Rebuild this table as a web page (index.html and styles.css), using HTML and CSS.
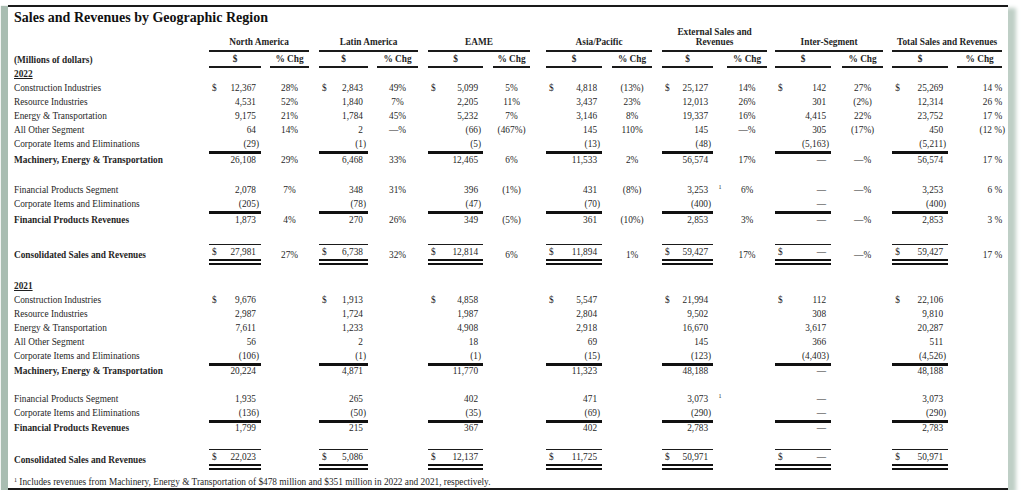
FILE: index.html
```html
<!DOCTYPE html>
<html lang="en">
<head>
<meta charset="utf-8">
<title>Sales and Revenues by Geographic Region</title>
<link rel="stylesheet" href="styles.css">
</head>
<body>
<div class="frame">
<h1 class="title">Sales and Revenues by Geographic Region</h1>
<table class="tbl">
<colgroup>
<col class="c195">
<col class="c52"><col class="c9"><col class="c39"><col class="c10">
<col class="c49"><col class="c9"><col class="c41"><col class="c10">
<col class="c55"><col class="c10"><col class="c37"><col class="c16">
<col class="c56"><col class="c10"><col class="c40"><col class="c10">
<col class="c51"><col class="c14"><col class="c40"><col class="c8">
<col class="c56"><col class="c11"><col class="c41"><col class="c9">
<col class="c56"><col class="c9"><col class="c45">
</colgroup>
<thead>
<tr class="h1"><td></td><td colspan="3" class="gh">North America</td><td></td><td colspan="3" class="gh">Latin America</td><td></td><td colspan="3" class="gh">EAME</td><td></td><td colspan="3" class="gh">Asia/Pacific</td><td></td><td colspan="3" class="gh">External Sales and Revenues</td><td></td><td colspan="3" class="gh">Inter-Segment</td><td></td><td colspan="3" class="gh">Total Sales and Revenues</td></tr>
<tr class="h2"><td class="l b">(Millions of dollars)</td><td class="sh">$</td><td></td><td class="sh">% Chg</td><td></td><td class="sh">$</td><td></td><td class="sh">% Chg</td><td></td><td class="sh">$</td><td></td><td class="sh">% Chg</td><td></td><td class="sh">$</td><td></td><td class="sh">% Chg</td><td></td><td class="sh">$</td><td></td><td class="sh">% Chg</td><td></td><td class="sh">$</td><td></td><td class="sh">% Chg</td><td></td><td class="sh">$</td><td></td><td class="sh">% Chg</td></tr>
</thead>
<tbody class="y22">
<tr class="yr"><td class="l b u">2022</td><td colspan="27"></td></tr>
<tr><td class="l">Construction Industries</td><td class="v"><span class="d">$</span>12,367</td><td></td><td class="p">28%</td><td></td><td class="v"><span class="d">$</span>2,843</td><td></td><td class="p">49%</td><td></td><td class="v"><span class="d">$</span>5,099</td><td></td><td class="p">5%</td><td></td><td class="v"><span class="d">$</span>4,818</td><td></td><td class="p">(13%)</td><td></td><td class="v"><span class="d">$</span>25,127</td><td></td><td class="p">14%</td><td></td><td class="v"><span class="d">$</span>142</td><td></td><td class="p">27%</td><td></td><td class="v"><span class="d">$</span>25,269</td><td></td><td class="tp">14 %</td></tr>
<tr><td class="l">Resource Industries</td><td class="v">4,531</td><td></td><td class="p">52%</td><td></td><td class="v">1,840</td><td></td><td class="p">7%</td><td></td><td class="v">2,205</td><td></td><td class="p">11%</td><td></td><td class="v">3,437</td><td></td><td class="p">23%</td><td></td><td class="v">12,013</td><td></td><td class="p">26%</td><td></td><td class="v">301</td><td></td><td class="p">(2%)</td><td></td><td class="v">12,314</td><td></td><td class="tp">26 %</td></tr>
<tr><td class="l">Energy &amp; Transportation</td><td class="v">9,175</td><td></td><td class="p">21%</td><td></td><td class="v">1,784</td><td></td><td class="p">45%</td><td></td><td class="v">5,232</td><td></td><td class="p">7%</td><td></td><td class="v">3,146</td><td></td><td class="p">8%</td><td></td><td class="v">19,337</td><td></td><td class="p">16%</td><td></td><td class="v">4,415</td><td></td><td class="p">22%</td><td></td><td class="v">23,752</td><td></td><td class="tp">17 %</td></tr>
<tr><td class="l">All Other Segment</td><td class="v">64</td><td></td><td class="p">14%</td><td></td><td class="v">2</td><td></td><td class="p">—%</td><td></td><td class="v"><span class="n">(66)</span></td><td></td><td class="p">(467%)</td><td></td><td class="v">145</td><td></td><td class="p">110%</td><td></td><td class="v">145</td><td></td><td class="p">—%</td><td></td><td class="v">305</td><td></td><td class="p">(17%)</td><td></td><td class="v">450</td><td></td><td class="tp"><span class="n">(12 %)</span></td></tr>
<tr><td class="l">Corporate Items and Eliminations</td><td class="v"><span class="n">(29)</span></td><td></td><td class="p"></td><td></td><td class="v"><span class="n">(1)</span></td><td></td><td class="p"></td><td></td><td class="v"><span class="n">(5)</span></td><td></td><td class="p"></td><td></td><td class="v"><span class="n">(13)</span></td><td></td><td class="p"></td><td></td><td class="v"><span class="n">(48)</span></td><td></td><td class="p"></td><td></td><td class="v"><span class="n">(5,163)</span></td><td></td><td class="p"></td><td></td><td class="v"><span class="n">(5,211)</span></td><td></td><td class="tp"></td></tr>
<tr class="sub"><td class="l b">Machinery, Energy &amp; Transportation</td><td class="v">26,108</td><td></td><td class="p">29%</td><td></td><td class="v">6,468</td><td></td><td class="p">33%</td><td></td><td class="v">12,465</td><td></td><td class="p">6%</td><td></td><td class="v">11,533</td><td></td><td class="p">2%</td><td></td><td class="v">56,574</td><td></td><td class="p">17%</td><td></td><td class="v">—</td><td></td><td class="p">—%</td><td></td><td class="v">56,574</td><td></td><td class="tp">17 %</td></tr>
<tr class="s16"><td colspan="28"></td></tr>
<tr><td class="l">Financial Products Segment</td><td class="v">2,078</td><td></td><td class="p">7%</td><td></td><td class="v">348</td><td></td><td class="p">31%</td><td></td><td class="v">396</td><td></td><td class="p">(1%)</td><td></td><td class="v">431</td><td></td><td class="p">(8%)</td><td></td><td class="v">3,253</td><td class="m">1</td><td class="p">6%</td><td></td><td class="v">—</td><td></td><td class="p">—%</td><td></td><td class="v">3,253</td><td></td><td class="tp">6 %</td></tr>
<tr><td class="l">Corporate Items and Eliminations</td><td class="v"><span class="n">(205)</span></td><td></td><td class="p"></td><td></td><td class="v"><span class="n">(78)</span></td><td></td><td class="p"></td><td></td><td class="v"><span class="n">(47)</span></td><td></td><td class="p"></td><td></td><td class="v"><span class="n">(70)</span></td><td></td><td class="p"></td><td></td><td class="v"><span class="n">(400)</span></td><td></td><td class="p"></td><td></td><td class="v">—</td><td></td><td class="p"></td><td></td><td class="v"><span class="n">(400)</span></td><td></td><td class="tp"></td></tr>
<tr class="sub"><td class="l b">Financial Products Revenues</td><td class="v">1,873</td><td></td><td class="p">4%</td><td></td><td class="v">270</td><td></td><td class="p">26%</td><td></td><td class="v">349</td><td></td><td class="p">(5%)</td><td></td><td class="v">361</td><td></td><td class="p">(10%)</td><td></td><td class="v">2,853</td><td></td><td class="p">3%</td><td></td><td class="v">—</td><td></td><td class="p">—%</td><td></td><td class="v">2,853</td><td></td><td class="tp">3 %</td></tr>
<tr class="s17"><td colspan="28"></td></tr>
<tr class="con"><td class="l b">Consolidated Sales and Revenues</td><td class="v"><span class="d">$</span>27,981</td><td></td><td class="p">27%</td><td></td><td class="v"><span class="d">$</span>6,738</td><td></td><td class="p">32%</td><td></td><td class="v"><span class="d">$</span>12,814</td><td></td><td class="p">6%</td><td></td><td class="v"><span class="d">$</span>11,894</td><td></td><td class="p">1%</td><td></td><td class="v"><span class="d">$</span>59,427</td><td></td><td class="p">17%</td><td></td><td class="v"><span class="d">$</span>—</td><td></td><td class="p">—%</td><td></td><td class="v"><span class="d">$</span>59,427</td><td></td><td class="tp">17 %</td></tr>
<tr class="s16"><td colspan="28"></td></tr>
</tbody>
<tbody class="y21">
<tr class="yr"><td class="l b u">2021</td><td colspan="27"></td></tr>
<tr><td class="l">Construction Industries</td><td class="v"><span class="d">$</span>9,676</td><td></td><td class="p"></td><td></td><td class="v"><span class="d">$</span>1,913</td><td></td><td class="p"></td><td></td><td class="v"><span class="d">$</span>4,858</td><td></td><td class="p"></td><td></td><td class="v"><span class="d">$</span>5,547</td><td></td><td class="p"></td><td></td><td class="v"><span class="d">$</span>21,994</td><td></td><td class="p"></td><td></td><td class="v"><span class="d">$</span>112</td><td></td><td class="p"></td><td></td><td class="v"><span class="d">$</span>22,106</td><td></td><td class="tp"></td></tr>
<tr><td class="l">Resource Industries</td><td class="v">2,987</td><td></td><td class="p"></td><td></td><td class="v">1,724</td><td></td><td class="p"></td><td></td><td class="v">1,987</td><td></td><td class="p"></td><td></td><td class="v">2,804</td><td></td><td class="p"></td><td></td><td class="v">9,502</td><td></td><td class="p"></td><td></td><td class="v">308</td><td></td><td class="p"></td><td></td><td class="v">9,810</td><td></td><td class="tp"></td></tr>
<tr><td class="l">Energy &amp; Transportation</td><td class="v">7,611</td><td></td><td class="p"></td><td></td><td class="v">1,233</td><td></td><td class="p"></td><td></td><td class="v">4,908</td><td></td><td class="p"></td><td></td><td class="v">2,918</td><td></td><td class="p"></td><td></td><td class="v">16,670</td><td></td><td class="p"></td><td></td><td class="v">3,617</td><td></td><td class="p"></td><td></td><td class="v">20,287</td><td></td><td class="tp"></td></tr>
<tr><td class="l">All Other Segment</td><td class="v">56</td><td></td><td class="p"></td><td></td><td class="v">2</td><td></td><td class="p"></td><td></td><td class="v">18</td><td></td><td class="p"></td><td></td><td class="v">69</td><td></td><td class="p"></td><td></td><td class="v">145</td><td></td><td class="p"></td><td></td><td class="v">366</td><td></td><td class="p"></td><td></td><td class="v">511</td><td></td><td class="tp"></td></tr>
<tr><td class="l">Corporate Items and Eliminations</td><td class="v"><span class="n">(106)</span></td><td></td><td class="p"></td><td></td><td class="v"><span class="n">(1)</span></td><td></td><td class="p"></td><td></td><td class="v"><span class="n">(1)</span></td><td></td><td class="p"></td><td></td><td class="v"><span class="n">(15)</span></td><td></td><td class="p"></td><td></td><td class="v"><span class="n">(123)</span></td><td></td><td class="p"></td><td></td><td class="v"><span class="n">(4,403)</span></td><td></td><td class="p"></td><td></td><td class="v"><span class="n">(4,526)</span></td><td></td><td class="tp"></td></tr>
<tr class="sub"><td class="l b">Machinery, Energy &amp; Transportation</td><td class="v">20,224</td><td></td><td class="p"></td><td></td><td class="v">4,871</td><td></td><td class="p"></td><td></td><td class="v">11,770</td><td></td><td class="p"></td><td></td><td class="v">11,323</td><td></td><td class="p"></td><td></td><td class="v">48,188</td><td></td><td class="p"></td><td></td><td class="v">—</td><td></td><td class="p"></td><td></td><td class="v">48,188</td><td></td><td class="tp"></td></tr>
<tr class="s14"><td colspan="28"></td></tr>
<tr><td class="l">Financial Products Segment</td><td class="v">1,935</td><td></td><td class="p"></td><td></td><td class="v">265</td><td></td><td class="p"></td><td></td><td class="v">402</td><td></td><td class="p"></td><td></td><td class="v">471</td><td></td><td class="p"></td><td></td><td class="v">3,073</td><td class="m">1</td><td class="p"></td><td></td><td class="v">—</td><td></td><td class="p"></td><td></td><td class="v">3,073</td><td></td><td class="tp"></td></tr>
<tr><td class="l">Corporate Items and Eliminations</td><td class="v"><span class="n">(136)</span></td><td></td><td class="p"></td><td></td><td class="v"><span class="n">(50)</span></td><td></td><td class="p"></td><td></td><td class="v"><span class="n">(35)</span></td><td></td><td class="p"></td><td></td><td class="v"><span class="n">(69)</span></td><td></td><td class="p"></td><td></td><td class="v"><span class="n">(290)</span></td><td></td><td class="p"></td><td></td><td class="v">—</td><td></td><td class="p"></td><td></td><td class="v"><span class="n">(290)</span></td><td></td><td class="tp"></td></tr>
<tr class="sub"><td class="l b">Financial Products Revenues</td><td class="v">1,799</td><td></td><td class="p"></td><td></td><td class="v">215</td><td></td><td class="p"></td><td></td><td class="v">367</td><td></td><td class="p"></td><td></td><td class="v">402</td><td></td><td class="p"></td><td></td><td class="v">2,783</td><td></td><td class="p"></td><td></td><td class="v">—</td><td></td><td class="p"></td><td></td><td class="v">2,783</td><td></td><td class="tp"></td></tr>
<tr class="s14"><td colspan="28"></td></tr>
<tr class="con"><td class="l b">Consolidated Sales and Revenues</td><td class="v"><span class="d">$</span>22,023</td><td></td><td class="p"></td><td></td><td class="v"><span class="d">$</span>5,086</td><td></td><td class="p"></td><td></td><td class="v"><span class="d">$</span>12,137</td><td></td><td class="p"></td><td></td><td class="v"><span class="d">$</span>11,725</td><td></td><td class="p"></td><td></td><td class="v"><span class="d">$</span>50,971</td><td></td><td class="p"></td><td></td><td class="v"><span class="d">$</span>—</td><td></td><td class="p"></td><td></td><td class="v"><span class="d">$</span>50,971</td><td></td><td class="tp"></td></tr>
</tbody>
</table>
<p class="note"><sup class="fm">1</sup> Includes revenues from Machinery, Energy &amp; Transportation of $478 million and $351 million in 2022 and 2021, respectively.</p>
</div>
</body>
</html>
```

FILE: styles.css
```css
* { box-sizing: border-box; }
html, body { margin: 0; background: #fff; }
body {
  font-family: "Liberation Serif", "Times New Roman", serif;
  color: #1f1f1f;
}
.frame {
  margin: 5px 0 0 8px;
  width: 1000px;
  height: 485px;
  padding: 0 0 0 6px;
  background: #fff;
  border-top: 2px solid #1a1a1a;
  border-bottom: 2px solid #1a1a1a;
  box-shadow: -7px 1px 1px 0 #a9bdb2, 8px 3px 4px 0 #bfcfc6;
}
.title {
  margin: 0;
  padding-top: 3px;
  font-size: 14px;
  line-height: 16px;
  font-weight: bold;
  color: #111;
}
.tbl {
  margin-top: 1px;
  width: 988px;
  table-layout: fixed;
  border-collapse: separate;
  border-spacing: 0;
  font-size: 9.3px;
}
.c195 { width: 195px; }
.c56 { width: 56px; }
.c55 { width: 55px; }
.c52 { width: 52px; }
.c51 { width: 51px; }
.c49 { width: 49px; }
.c45 { width: 45px; }
.c41 { width: 41px; }
.c40 { width: 40px; }
.c39 { width: 39px; }
.c37 { width: 37px; }
.c16 { width: 16px; }
.c14 { width: 14px; }
.c11 { width: 11px; }
.c10 { width: 10px; }
.c9 { width: 9px; }
.c8 { width: 8px; }

.tbl td {
  padding: 0 0 2px 0;
  line-height: 10px;
  vertical-align: bottom;
  white-space: nowrap;
}
.tbl tr { height: 14px; }

.tbl .gh {
  font-weight: bold;
  text-align: center;
  white-space: normal;
  padding-bottom: 3px;
  border-bottom: 2px solid #1a1a1a;
}
.tbl .sh {
  font-weight: bold;
  text-align: center;
  border-bottom: 2px solid #1a1a1a;
}
.tbl tr.h2 td.l { padding-bottom: 3px; }

.b { font-weight: bold; }
.u { text-decoration: underline; }

.tbl .v {
  text-align: right;
  padding-right: 5px;
  padding-left: 3px;
}
.d { float: left; }
.n { margin-right: -3px; }
.tbl .p { text-align: center; }
.tbl .tp { text-align: right; padding-right: 0; }
.tbl .m {
  font-size: 6px;
  line-height: 6px;
  text-align: center;
  vertical-align: top;
  padding-top: 1px;
}

.tbl .sub td.v { border-top: 3px solid #111; }

.tbl .con td { vertical-align: middle; padding: 0; }
.tbl .con td.v {
  border-top: 1px solid #1a1a1a;
  border-bottom: 6px double #111;
  padding: 2px 5px 2px 3px;
}

.tbl tr.s14 { height: 14px; }
.tbl tr.s16 { height: 16px; }
.tbl tr.s17 { height: 17px; }
.tbl tr.h1 { height: 25px; }
.tbl tr.h2 { height: 16px; }
.tbl .y22 tr.yr { height: 13px; }
.tbl .y21 tr.yr { height: 12px; }
.tbl .y22 tr.sub { height: 16px; }
.tbl .y21 tr.sub { height: 15px; }
.tbl tr.con { height: 21px; }

.note {
  margin: 6px 0 0 0;
  font-size: 9.3px;
  line-height: 12px;
}
.fm {
  font-size: 6px;
  line-height: 0;
  vertical-align: 3px;
}
```
